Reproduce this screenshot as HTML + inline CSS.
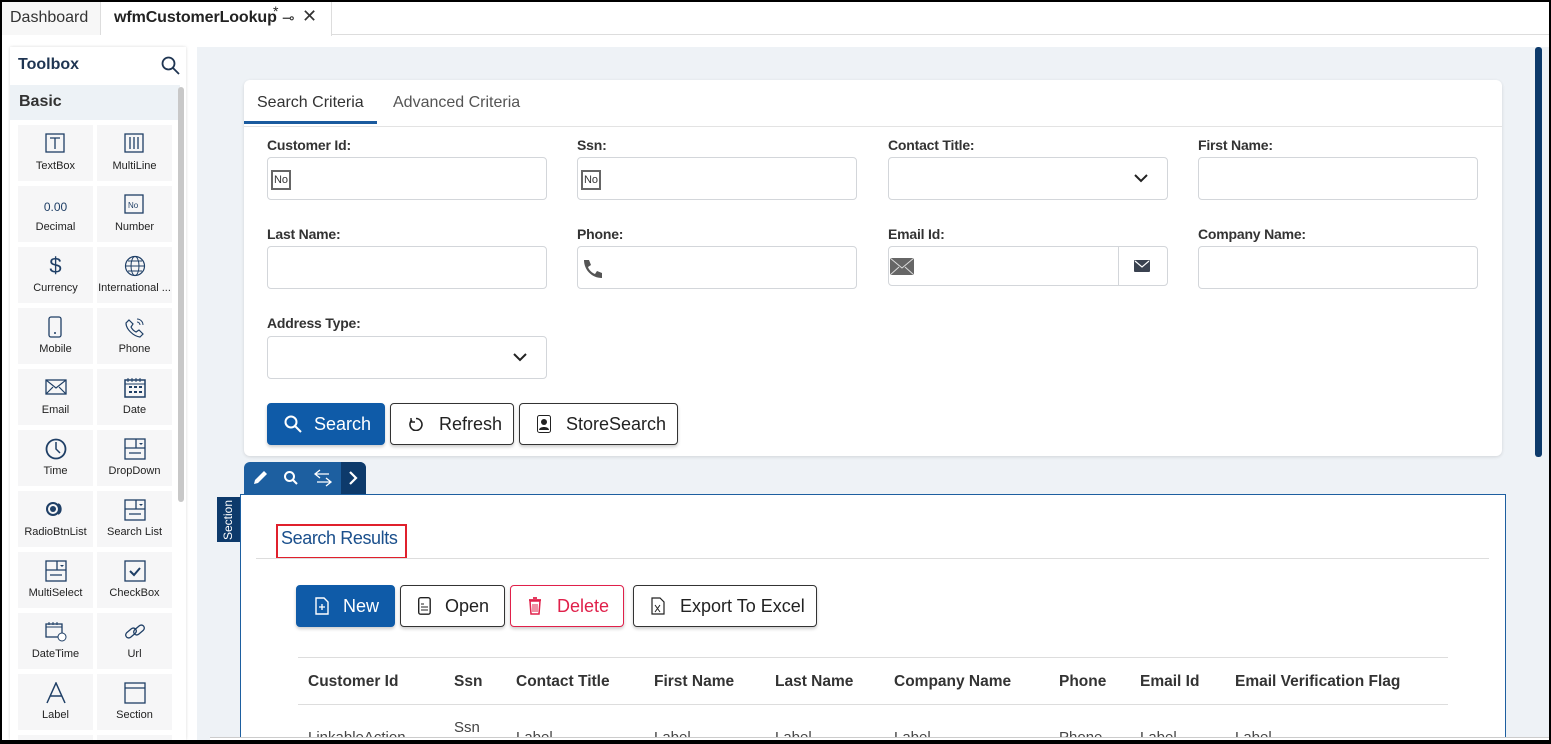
<!DOCTYPE html>
<html><head><meta charset="utf-8"><style>
*{box-sizing:border-box;margin:0;padding:0}
html,body{width:1551px;height:744px;overflow:hidden}
body{font-family:"Liberation Sans",sans-serif;background:#000;position:relative}
.a{position:absolute}
#frame{left:2px;top:2px;width:1547px;height:738px;background:#fff;overflow:hidden}
.lbl{position:absolute;font-size:14px;color:#333;font-weight:bold;letter-spacing:-0.2px}
.inp{position:absolute;width:280px;height:43px;border:1px solid #d3d6da;border-radius:4px;background:#fff}
.tile{position:absolute;width:75px;height:56px;background:#f6f6f7;text-align:center;font-size:11px;color:#222}
.tile svg{position:absolute;left:27px;top:8px}
.tile span{position:absolute;left:0;right:0;top:35px;white-space:nowrap;overflow:hidden}
.btn{position:absolute;height:42px;border:1px solid #333;border-radius:4px;background:#fff;font-size:18px;color:#222;display:flex;align-items:center;box-shadow:0 2px 3px rgba(0,0,0,.2)}
.th{position:absolute;top:671px;font-size:15.5px;font-weight:bold;color:#333}
.td{position:absolute;top:727px;font-size:15px;color:#444}
</style></head><body>
<div id="frame" class="a">
<div class="a" style="left:0;top:0;width:1547px;height:33px;background:#fff;border-bottom:1px solid #ddd"></div>
<div class="a" style="left:0;top:0;width:99px;height:33px;background:#f7f7f7;border-right:1px solid #ddd"></div>
<div class="a" style="left:8px;top:7px;font-size:16px;color:#333">Dashboard</div>
<div class="a" style="left:99px;top:0;width:231px;height:34px;background:#fff;border-right:1px solid #ddd"></div>
<div class="a" style="left:112px;top:7px;font-size:16px;color:#222;font-weight:bold;letter-spacing:-0.1px">wfmCustomerLookup</div>
<div class="a" style="left:271px;top:1px;font-size:14px;color:#222">*</div>
<div class="a" style="left:280px;top:7px;font-size:15px;color:#333">⊸</div>
<div class="a" style="left:300px;top:4px;font-size:18px;color:#333">✕</div>
<div class="a" style="left:0;top:34px;width:1547px;height:704px;background:#fff"></div>
<div class="a" style="left:195px;top:45px;width:1352px;height:693px;background:#eef2f6"></div>
<div class="a" style="left:8px;top:45px;width:176px;height:693px;background:#fff;box-shadow:0 0 3px rgba(0,0,0,.15)"></div>
<div class="a" style="left:16px;top:54px;font-size:16px;font-weight:bold;color:#1f3552">Toolbox</div>
<svg class="a" style="left:159px;top:54px" width="19" height="19" viewBox="0 0 19 19"><circle cx="7.5" cy="7.5" r="6" fill="none" stroke="#1f3552" stroke-width="1.8"/><path d="M12 12l6 6" stroke="#1f3552" stroke-width="1.8"/></svg>
<div class="a" style="left:8px;top:83px;width:170px;height:35px;background:#edf2f6"></div>
<div class="a" style="left:17px;top:91px;font-size:16px;font-weight:bold;color:#333">Basic</div>
<div class="a" style="left:176px;top:85px;width:6px;height:415px;background:#c8c8c8;border-radius:3px"></div>
<div class="tile" style="left:16px;top:123px"><svg width="20" height="20"><rect x="1" y="1" width="18" height="18" fill="none" stroke="#1f3f66" stroke-width="1.3"/><path d="M5 5h10M10 5v11" stroke="#1f3f66" stroke-width="1.3"/></svg><span>TextBox</span></div>
<div class="tile" style="left:95px;top:123px"><svg width="20" height="20"><rect x="1" y="1" width="18" height="18" fill="none" stroke="#1f3f66" stroke-width="1.3"/><path d="M6 4v12M10 4v12M14 4v12" stroke="#1f3f66" stroke-width="1.3"/></svg><span>MultiLine</span></div>
<div class="tile" style="left:16px;top:184px"><span style="top:14px;font-size:12px;color:#1f3f66">0.00</span><span>Decimal</span></div>
<div class="tile" style="left:95px;top:184px"><svg width="20" height="20"><rect x="1" y="1" width="18" height="18" fill="none" stroke="#1f3f66" stroke-width="1.3"/><text x="4" y="14" font-size="8" fill="#1f3f66" font-family="Liberation Sans">No</text></svg><span>Number</span></div>
<div class="tile" style="left:16px;top:245px"><span style="top:6px;font-size:22px;color:#1f3f66">$</span><span>Currency</span></div>
<div class="tile" style="left:95px;top:245px"><svg width="22" height="22"><circle cx="11" cy="11" r="9.5" fill="none" stroke="#1f3f66" stroke-width="1.2"/><ellipse cx="11" cy="11" rx="4" ry="9.5" fill="none" stroke="#1f3f66"/><path d="M2 11h18M4 6h14M4 16h14" stroke="#1f3f66"/></svg><span>International ...</span></div>
<div class="tile" style="left:16px;top:306px"><svg width="20" height="22"><rect x="4" y="1" width="12" height="20" rx="2" fill="none" stroke="#1f3f66" stroke-width="1.3"/><circle cx="10" cy="17" r="1" fill="#1f3f66"/></svg><span>Mobile</span></div>
<div class="tile" style="left:95px;top:306px"><svg width="22" height="22"><path d="M5 4l4 4-2 3c1 2 3 4 5 5l3-2 4 4-3 3C9 20 2 13 2 7z" fill="none" stroke="#1f3f66" stroke-width="1.2"/><path d="M13 3a6 6 0 016 6M13 6a3 3 0 013 3" fill="none" stroke="#1f3f66"/></svg><span>Phone</span></div>
<div class="tile" style="left:16px;top:367px"><svg width="22" height="20"><rect x="1" y="3" width="20" height="14" fill="none" stroke="#1f3f66" stroke-width="1.3"/><path d="M1 3l10 8 10-8M1 17l7-7M21 17l-7-7" fill="none" stroke="#1f3f66" stroke-width="1.2"/></svg><span>Email</span></div>
<div class="tile" style="left:95px;top:367px"><svg width="22" height="22"><rect x="1" y="3" width="20" height="17" fill="none" stroke="#1f3f66" stroke-width="1.5"/><path d="M1 7h20M4 1v4M8 1v4M12 1v4M16 1v4" stroke="#1f3f66"/><path d="M5 10h3M10 10h3M15 10h3M5 15h3M10 15h3M15 15h3" stroke="#1f3f66" stroke-width="2"/></svg><span>Date</span></div>
<div class="tile" style="left:16px;top:428px"><svg width="22" height="22"><circle cx="11" cy="11" r="9.5" fill="none" stroke="#1f3f66" stroke-width="1.8"/><path d="M11 4v7l4 4" fill="none" stroke="#1f3f66" stroke-width="1.5"/></svg><span>Time</span></div>
<div class="tile" style="left:95px;top:428px"><svg width="22" height="22"><rect x="1" y="1" width="20" height="20" fill="none" stroke="#1f3f66" stroke-width="1.3"/><path d="M1 10h20M12 1v9M5 15h12" stroke="#1f3f66" stroke-width="1.3"/><path d="M15 5h4l-2 2z" fill="#1f3f66"/></svg><span>DropDown</span></div>
<div class="tile" style="left:16px;top:489px"><svg width="22" height="20"><circle cx="8" cy="10" r="6" fill="none" stroke="#1f3f66" stroke-width="2"/><circle cx="8" cy="10" r="3" fill="#1f3f66"/><path d="M13 5a6 6 0 010 10" fill="none" stroke="#1f3f66" stroke-width="2"/></svg><span>RadioBtnList</span></div>
<div class="tile" style="left:95px;top:489px"><svg width="22" height="22"><rect x="1" y="1" width="20" height="20" fill="none" stroke="#1f3f66" stroke-width="1.3"/><path d="M1 10h20M12 1v9M5 15h12" stroke="#1f3f66" stroke-width="1.3"/><path d="M15 5h4l-2 2z" fill="#1f3f66"/></svg><span>Search List</span></div>
<div class="tile" style="left:16px;top:550px"><svg width="22" height="22"><rect x="1" y="1" width="20" height="20" fill="none" stroke="#1f3f66" stroke-width="1.3"/><path d="M1 10h20M12 1v9M5 15h12" stroke="#1f3f66" stroke-width="1.3"/><path d="M15 5h4l-2 2z" fill="#1f3f66"/></svg><span>MultiSelect</span></div>
<div class="tile" style="left:95px;top:550px"><svg width="22" height="22"><rect x="1" y="1" width="20" height="20" fill="none" stroke="#1f3f66" stroke-width="1.3"/><path d="M6 11l4 4 6-7" fill="none" stroke="#1f3f66" stroke-width="2"/></svg><span>CheckBox</span></div>
<div class="tile" style="left:16px;top:611px"><svg width="22" height="22"><rect x="1" y="3" width="16" height="13" fill="none" stroke="#1f3f66" stroke-width="1.3"/><path d="M1 6h16M4 1v3M8 1v3M12 1v3" stroke="#1f3f66"/><circle cx="17" cy="16" r="4" fill="#fff" stroke="#1f3f66"/></svg><span>DateTime</span></div>
<div class="tile" style="left:95px;top:611px"><svg width="22" height="22"><rect x="1" y="9" width="12" height="6" rx="3" transform="rotate(-40 7 12)" fill="none" stroke="#1f3f66" stroke-width="1.3"/><rect x="9" y="6" width="12" height="6" rx="3" transform="rotate(-40 15 9)" fill="none" stroke="#1f3f66" stroke-width="1.3"/></svg><span>Url</span></div>
<div class="tile" style="left:16px;top:672px"><svg width="22" height="22"><path d="M2 21L11 1l9 20M5 14h12" fill="none" stroke="#1f3f66" stroke-width="1.5"/></svg><span>Label</span></div>
<div class="tile" style="left:95px;top:672px"><svg width="22" height="22"><rect x="1" y="1" width="20" height="20" fill="none" stroke="#1f3f66" stroke-width="1.3"/><path d="M1 6h20" stroke="#1f3f66" stroke-width="1.3"/></svg><span>Section</span></div>
<div class="tile" style="left:16px;top:733px;height:5px"></div><div class="tile" style="left:95px;top:733px;height:5px"></div>
<div class="a" style="left:1533px;top:45px;width:7px;height:410px;background:#0d3a6b;border-radius:3px"></div>
<div class="a" style="left:242px;top:78px;width:1258px;height:376px;background:#fff;border-radius:6px;box-shadow:0 1px 3px rgba(0,0,0,.12)"></div>
<div class="a" style="left:242px;top:124px;width:1258px;height:1px;background:#e3e3e3"></div>
<div class="a" style="left:255px;top:92px;font-size:16px;color:#333">Search Criteria</div>
<div class="a" style="left:242px;top:119px;width:133px;height:3px;background:#1a5a9e"></div>
<div class="a" style="left:391px;top:92px;font-size:16px;color:#555">Advanced Criteria</div>
<div class="lbl" style="left:265px;top:135px">Customer Id:</div>
<div class="inp" style="left:265px;top:155px"></div>
<div class="a" style="left:269px;top:168px;width:20px;height:20px;border:2px solid #666;font-size:11px;text-align:center;line-height:16px;color:#333">No</div>
<div class="lbl" style="left:575px;top:135px">Ssn:</div>
<div class="inp" style="left:575px;top:155px"></div>
<div class="a" style="left:579px;top:168px;width:20px;height:20px;border:2px solid #666;font-size:11px;text-align:center;line-height:16px;color:#333">No</div>
<div class="lbl" style="left:886px;top:135px">Contact Title:</div>
<div class="inp" style="left:886px;top:155px"></div>
<svg class="a" style="left:1132px;top:171px" width="14" height="10"><path d="M1 2l6 6 6-6" fill="none" stroke="#222" stroke-width="2"/></svg>
<div class="lbl" style="left:1196px;top:135px">First Name:</div>
<div class="inp" style="left:1196px;top:155px"></div>
<div class="lbl" style="left:265px;top:224px">Last Name:</div>
<div class="inp" style="left:265px;top:244px"></div>
<div class="lbl" style="left:575px;top:224px">Phone:</div>
<div class="inp" style="left:575px;top:244px"></div>
<svg class="a" style="left:579px;top:256px" width="22" height="22"><path d="M3 2l5 0 2 5-3 2c1 3 4 6 7 7l2-3 5 2v5c-10 0-18-8-18-18z" fill="#555"/></svg>
<div class="lbl" style="left:886px;top:224px">Email Id:</div>
<div class="inp" style="left:886px;top:244px;width:280px;height:40px"></div>
<div class="a" style="left:1116px;top:244px;width:1px;height:40px;background:#d3d6da"></div>
<svg class="a" style="left:888px;top:256px" width="24" height="17"><rect width="24" height="17" fill="#666"/><path d="M0 0l12 10 12-10M0 17l9-8M24 17l-9-8" fill="none" stroke="#ddd"/></svg>
<svg class="a" style="left:1132px;top:258px" width="16" height="12"><rect width="16" height="12" rx="1" fill="#3a4250"/><path d="M1 1l7 6 7-6" fill="none" stroke="#fff" stroke-width="1.2"/></svg>
<div class="lbl" style="left:1196px;top:224px">Company Name:</div>
<div class="inp" style="left:1196px;top:244px"></div>
<div class="lbl" style="left:265px;top:313px">Address Type:</div>
<div class="inp" style="left:265px;top:334px"></div>
<svg class="a" style="left:511px;top:350px" width="14" height="10"><path d="M1 2l6 6 6-6" fill="none" stroke="#222" stroke-width="2"/></svg>
<div class="btn" style="left:265px;top:401px;width:118px;background:#0f5ba8;border-color:#0f5ba8;color:#fff"><svg style="margin:0 12px 0 16px" width="18" height="18"><circle cx="7" cy="7" r="5.5" fill="none" stroke="#fff" stroke-width="2"/><path d="M11 11l6 6" stroke="#fff" stroke-width="2"/></svg>Search</div>
<div class="btn" style="left:388px;top:401px;width:124px"><svg style="margin:0 16px 0 18px" width="14" height="14"><path d="M3 3a6 6 0 104-1.5" fill="none" stroke="#222" stroke-width="1.6"/><path d="M2 1v4h4" fill="none" stroke="#222" stroke-width="1.4"/></svg>Refresh</div>
<div class="btn" style="left:517px;top:401px;width:159px"><svg style="margin:0 15px 0 17px" width="14" height="18"><rect x="0.5" y="0.5" width="13" height="17" rx="2" fill="none" stroke="#222"/><circle cx="7" cy="7" r="3" fill="#222"/><path d="M2 15c0-4 10-4 10 0z" fill="#222"/></svg>StoreSearch</div>
<div class="a" style="left:242px;top:460px;width:122px;height:32px;background:#1d5fa0;border-radius:6px 6px 0 0"></div>
<div class="a" style="left:339px;top:460px;width:25px;height:32px;background:#0d3a6b;border-radius:0 6px 0 0"></div>
<svg class="a" style="left:249px;top:467px" width="18" height="18"><path d="M3 15l1-4 9-9 3 3-9 9z" fill="#fff"/></svg>
<svg class="a" style="left:281px;top:468px" width="16" height="16"><circle cx="6.5" cy="6.5" r="4.5" fill="none" stroke="#fff" stroke-width="2"/><path d="M10 10l4 4" stroke="#fff" stroke-width="2"/></svg>
<svg class="a" style="left:310px;top:466px" width="22" height="20"><path d="M8 2L3 6l5 4M3 6h14M14 10l5 4-5 4M19 14H5" fill="none" stroke="#fff" stroke-width="1.3"/></svg>
<svg class="a" style="left:345px;top:468px" width="12" height="16"><path d="M3 2l6 6-6 6" fill="none" stroke="#fff" stroke-width="2.2"/></svg>
<div class="a" style="left:238px;top:492px;width:1266px;height:246px;background:#fff;border:1px solid #1d5fa0;border-bottom:none"></div>
<div class="a" style="left:215px;top:495px;width:23px;height:45px;background:#0d3a6b"></div>
<div class="a" style="left:215px;top:495px;width:23px;height:45px;color:#fff;font-size:12px;writing-mode:vertical-rl;transform:rotate(180deg);text-align:center;line-height:23px">Section</div>
<div class="a" style="left:274px;top:522px;width:131px;height:35px;border:2px solid #e0202c"></div>
<div class="a" style="left:279px;top:526px;font-size:18px;color:#1a4f8c;font-weight:500;letter-spacing:-0.4px">Search Results</div>
<div class="a" style="left:254px;top:556px;width:1233px;height:1px;background:#ddd"></div>
<div class="btn" style="left:294px;top:583px;width:99px;background:#0f5ba8;border-color:#0f5ba8;color:#fff"><svg style="margin:0 14px 0 18px" width="14" height="18"><path d="M1 1h8l4 4v12H1z" fill="none" stroke="#fff" stroke-width="1.4"/><path d="M7 7v6M4 10h6" stroke="#fff" stroke-width="1.3"/></svg>New</div>
<div class="btn" style="left:398px;top:583px;width:105px"><svg style="margin:0 14px 0 17px" width="13" height="18"><rect x="0.7" y="0.7" width="11.5" height="16.5" rx="2" fill="none" stroke="#222" stroke-width="1.4"/><path d="M3 10h7M3 13h7M3 7h3" stroke="#222"/></svg>Open</div>
<div class="btn" style="left:508px;top:583px;width:114px;border-color:#e0204a;color:#e0204a"><svg style="margin:0 15px 0 17px" width="14" height="18"><path d="M1 3h12M5 1h4" stroke="#e0204a" stroke-width="1.8"/><path d="M2 4h10l-1 13H3z" fill="none" stroke="#e0204a" stroke-width="1.5"/><path d="M5 7v8M7 7v8M9 7v8" stroke="#e0204a"/></svg>Delete</div>
<div class="btn" style="left:631px;top:583px;width:184px"><svg style="margin:0 15px 0 17px" width="14" height="18"><path d="M1 1h8l4 4v12H1z" fill="none" stroke="#222" stroke-width="1.2"/><path d="M4 8l5 7M9 8l-5 7" stroke="#222"/></svg>Export To Excel</div>
<div class="a" style="left:296px;top:655px;width:1150px;height:1px;background:#ddd"></div>
<div class="a" style="left:296px;top:702px;width:1150px;height:1px;background:#ddd"></div>
<div class="th" style="left:306px">Customer Id</div>
<div class="th" style="left:452px">Ssn</div>
<div class="th" style="left:514px">Contact Title</div>
<div class="th" style="left:652px">First Name</div>
<div class="th" style="left:773px">Last Name</div>
<div class="th" style="left:892px">Company Name</div>
<div class="th" style="left:1057px">Phone</div>
<div class="th" style="left:1138px">Email Id</div>
<div class="th" style="left:1233px">Email Verification Flag</div>
<div class="td" style="left:306px">LinkableAction</div>
<div class="td" style="left:452px;top:717px">Ssn</div>
<div class="td" style="left:514px">Label</div>
<div class="td" style="left:652px">Label</div>
<div class="td" style="left:773px">Label</div>
<div class="td" style="left:892px">Label</div>
<div class="td" style="left:1057px">Phone</div>
<div class="td" style="left:1138px">Label</div>
<div class="td" style="left:1233px">Label</div>
<div class="a" style="left:208px;top:735px;width:1339px;height:3px;background:#fff;border-top:1px solid #ccc"></div>
</div>
</body></html>
